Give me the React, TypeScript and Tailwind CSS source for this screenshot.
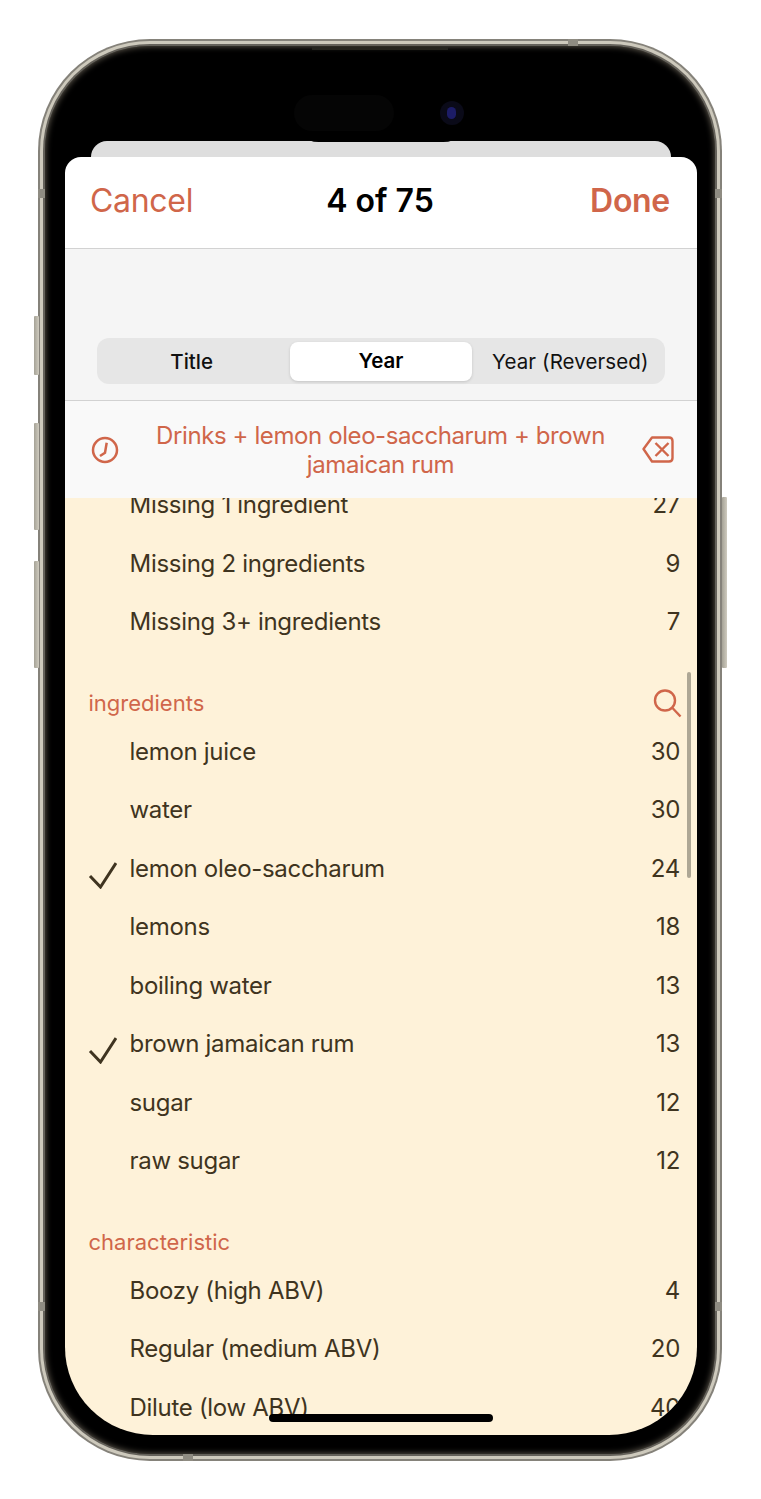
import React from "react";

const font = { fontFamily: "Inter, 'Noto Sans', sans-serif" };

function Check() {
  return (
    <svg width="30" height="30" viewBox="0 0 30 30" fill="none" className="absolute left-[-43px] top-[5px]">
      <path d="M3 17 L13.5 28 L29 4" stroke="#3f3420" strokeWidth="3" />
    </svg>
  );
}

function Row({ label, count, checked }: { label: string; count: string; checked?: boolean }) {
  return (
    <div className="flex h-[58.5px] items-center pl-[65px] pr-[17px] text-[24px] leading-[30px] tracking-[-0.3px] text-[#3f3420]">
      <div className="relative flex-1 whitespace-nowrap">
        {checked && <Check />}
        {label}
      </div>
      <div>{count}</div>
    </div>
  );
}

function SectionHeader({ label, search }: { label: string; search?: boolean }) {
  return (
    <div className="flex h-[71px] items-end justify-between pb-[6px] pl-[24px] pr-[15px] text-[22px] leading-[28px] text-[#d0664a]">
      <span>{label}</span>
      {search && (
        <svg width="29" height="29" viewBox="0 0 29 29" fill="none" stroke="#d0664a" strokeWidth="2.4" className="mb-[-1px]">
          <circle cx="12" cy="11.5" r="10" />
          <path d="M19.5 19 L27.5 27.5" />
        </svg>
      )}
    </div>
  );
}

function Band({ className }: { className: string }) {
  return <div className={`absolute bg-[#8f8c82] ${className}`} />;
}

function SideButton({ className }: { className: string }) {
  return <div className={`absolute w-[5px] rounded-[1px] bg-gradient-to-r from-[#a5a296] to-[#cfcbbf] ${className}`} />;
}

export default function App() {
  return (
    <div className="h-[1499px] w-[761px] overflow-hidden bg-white pl-[38px] pt-[39px]" style={font}>
      <div className="relative h-[1422px] w-[684px]">
        <SideButton className="left-[-4px] top-[277px] h-[59px]" />
        <SideButton className="left-[-4px] top-[384px] h-[107px]" />
        <SideButton className="left-[-4px] top-[522px] h-[107px]" />
        <SideButton className="right-[-5px] top-[458px] h-[171px]" />

        <div className="h-full w-full rounded-[112px] bg-[#85827a] p-[2px]">
          <div className="h-full w-full rounded-[110px] bg-[#cdc9bc] p-[3px]">
            <div className="h-full w-full rounded-[107px] bg-[#64615a] p-[2px]">
              <div className="h-full w-full rounded-[105px] bg-black pb-[18px] pl-[20px] pr-[18px] pt-[95px] shadow-[inset_0_0_6px_rgba(120,112,98,0.9)]">
                <div className="mx-[26px] h-[16px] rounded-t-[16px] bg-[#dedede]" />
                <div className="relative flex h-[1278px] w-[632px] flex-col overflow-hidden rounded-b-[88px] rounded-t-[16px]">
                  <div className="grid h-[92px] shrink-0 grid-cols-3 items-center border-b border-[#d2d2d2] bg-white pb-[4px] pl-[25px] pr-[27px] text-[32px]">
                    <span className="tracking-[-0.3px] text-[#d0664a]">Cancel</span>
                    <span className="text-center font-semibold text-black">4 of 75</span>
                    <span className="text-right font-semibold tracking-[-0.3px] text-[#d0664a]">Done</span>
                  </div>

                  <div className="flex h-[152px] shrink-0 flex-col justify-end border-b border-[#d2d2d2] bg-[#f5f5f5] px-[32px] pb-[16px]">
                    <div className="grid h-[46px] grid-cols-3 items-center rounded-[12px] bg-[#e6e6e6] text-[20.5px] text-[#111111]">
                      <div className="pt-[2px] text-center font-medium">Title</div>
                      <div className="mx-[3.5px] flex h-[39px] items-center justify-center rounded-[8px] bg-white pt-[1px] font-semibold text-black shadow-[0_1px_3px_rgba(0,0,0,0.15)]">
                        Year
                      </div>
                      <div className="whitespace-nowrap pt-[2px] text-center font-normal tracking-[0.1px]">Year (Reversed)</div>
                    </div>
                  </div>

                  <div className="flex h-[97px] shrink-0 items-center justify-between bg-[#f9f9f9] pl-[26px] pr-[23px]">
                    <svg width="28" height="28" viewBox="0 0 28 28" fill="none" stroke="#d0664a" strokeWidth="2.5">
                      <circle cx="14" cy="14" r="12" />
                      <path d="M15.7 6.7 L14 16.7 L9 20" />
                    </svg>
                    <div className="w-[480px] text-center text-[24px] leading-[29px] tracking-[-0.4px] text-[#d0664a]">
                      Drinks + lemon oleo-saccharum + brown jamaican rum
                    </div>
                    <svg width="32" height="27" viewBox="0 0 32 27" fill="none" stroke="#d0664a" strokeWidth="2.4" strokeLinejoin="round">
                      <path d="M1.5 13 L10 1.5 H27 Q30.5 1.5 30.5 5 V22 Q30.5 25.5 27 25.5 H10 Z" />
                      <path d="M13.5 7 L26.5 20 M26.5 7 L13.5 20" />
                    </svg>
                  </div>

                  <div className="min-h-0 flex-1 overflow-hidden bg-[#fef2d9]">
                    <div className="mt-[-22px] ml-[-0.5px]">
                      <Row label="Missing 1 ingredient" count="27" />
                      <Row label="Missing 2 ingredients" count="9" />
                      <Row label="Missing 3+ ingredients" count="7" />
                      <SectionHeader label="ingredients" search />
                      <Row label="lemon juice" count="30" />
                      <Row label="water" count="30" />
                      <Row label="lemon oleo-saccharum" count="24" checked />
                      <Row label="lemons" count="18" />
                      <Row label="boiling water" count="13" />
                      <Row label="brown jamaican rum" count="13" checked />
                      <Row label="sugar" count="12" />
                      <Row label="raw sugar" count="12" />
                      <SectionHeader label="characteristic" />
                      <Row label="Boozy (high ABV)" count="4" />
                      <Row label="Regular (medium ABV)" count="20" />
                      <Row label="Dilute (low ABV)" count="40" />
                    </div>
                  </div>

                  <div className="absolute left-[622px] top-[515px] h-[206px] w-[4px] rounded-full bg-[#aea795]" />
                  <div className="absolute left-[204px] top-[1257px] h-[8px] w-[224px] rounded-full bg-black" />
                </div>
              </div>
            </div>
          </div>
        </div>

        <div className="absolute left-[274px] top-[8px] h-[3px] w-[136px] bg-[#26251f]" />
        <div className="absolute left-[256px] top-[54px] h-[49px] w-[174px] rounded-[25px] bg-black" />
        <div className="absolute left-[256px] top-[56px] h-[36px] w-[100px] rounded-[18px] bg-[#050505]" />
        <div className="absolute left-[402px] top-[62px] h-[24px] w-[24px] rounded-full bg-[#0a0a18]" />
        <div className="absolute left-[409px] top-[68px] h-[12px] w-[9px] rounded-full bg-[#1c1c66]" />

        <Band className="left-[530px] top-0 h-[7px] w-[10px]" />
        <Band className="left-0 top-[150px] h-[9px] w-[7px]" />
        <Band className="right-0 top-[150px] h-[9px] w-[7px]" />
        <Band className="left-0 top-[1263px] h-[9px] w-[7px]" />
        <Band className="right-0 top-[1263px] h-[9px] w-[7px]" />
        <Band className="bottom-0 left-[145px] h-[7px] w-[10px]" />
      </div>
    </div>
  );
}
